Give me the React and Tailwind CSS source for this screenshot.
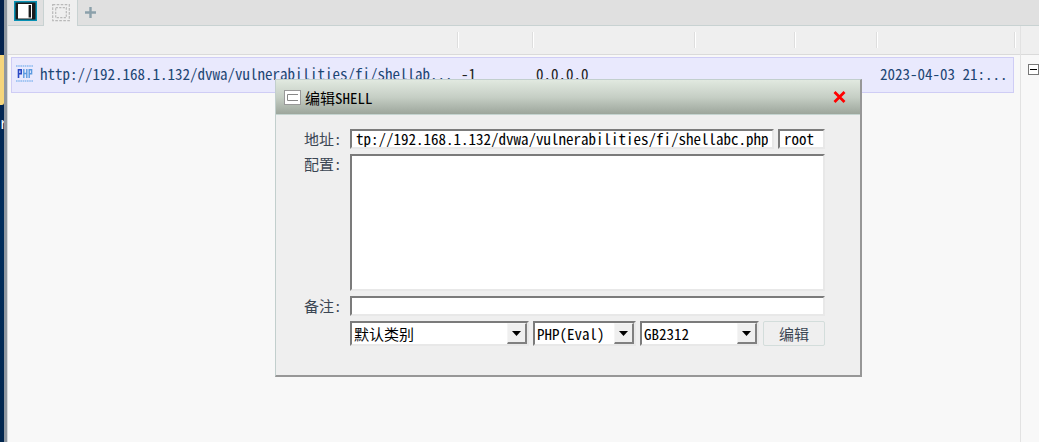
import React, { useState } from "react";

const columns = ["w-auto", "w-[75px]", "w-[162px]", "w-[100px]", "w-[82px]", "w-[138px]"];

const sunken =
  "border-2 border-t-[#7b7b7b] border-l-[#7b7b7b] border-r-[#e8e8e8] border-b-[#e8e8e8] bg-white";

function WindowIcon() {
  return (
    <svg width="23" height="20" viewBox="0 0 23 20" aria-hidden="true">
      <rect width="23" height="20" fill="#0791b4" />
      <rect x="1.5" y="1.5" width="20" height="17" fill="#1b1b1b" />
      <rect x="4" y="3" width="14" height="14.5" fill="#fff" />
      <rect x="14.6" y="4" width="2.4" height="12.5" fill="#1b1b1b" />
    </svg>
  );
}

function DottedIcon() {
  return (
    <svg width="18" height="18" viewBox="0 0 18 18" fill="none" stroke="#b9b9b9" aria-hidden="true">
      <rect x="0.7" y="0.7" width="16.6" height="16" strokeWidth="1.2" strokeDasharray="2.6 1.4" />
      <rect x="3.7" y="3.7" width="10.6" height="10" strokeWidth="1.2" strokeDasharray="2.2 1.3" />
    </svg>
  );
}

function PhpIcon() {
  return (
    <svg width="17" height="17" viewBox="0 0 17 17" fill="none" aria-hidden="true" className="shrink-0">
      <path d="M0 1h17M0 16h17" stroke="#5fa4ea" strokeWidth="1.2" strokeDasharray="1.6 0.6" />
      <path d="M2.5 13V4.8H5.2v4H2.5" stroke="#2a49c4" strokeWidth="1.6" />
      <path d="M7.8 4v9M10.8 4v9M7.8 8.5h3" stroke="#5c9be0" strokeWidth="1.4" />
      <path d="M13.2 13V4.8h2.4v4h-2.4" stroke="#5c9be0" strokeWidth="1.4" />
    </svg>
  );
}

function Divider() {
  return <div className="h-4 w-[2px] border-l border-l-[#dedede] bg-white" />;
}

function SelectBox({ label, value, options, onChange, className }) {
  return (
    <div className={`relative h-[25px] ${sunken} ${className}`}>
      <select
        aria-label={label}
        value={value}
        onChange={(e) => onChange(e.target.value)}
        className="block w-full h-full pl-[2px] pr-5 appearance-none bg-white text-black leading-5 outline-none"
      >
        {options.map((option) => (
          <option key={option}>{option}</option>
        ))}
      </select>
      <span className="pointer-events-none absolute inset-y-0 right-0 flex items-center justify-center w-5 bg-[#efefef] border border-r-2 border-b-2 border-t-[#f5f5f5] border-l-[#f5f5f5] border-r-[#808080] border-b-[#808080]">
        <svg width="9" height="5" viewBox="0 0 9 5" aria-hidden="true">
          <path d="M0 0h9L4.5 5z" fill="#000" />
        </svg>
      </span>
    </div>
  );
}

function EditDialog({ onClose }) {
  const [form, setForm] = useState({
    url: "tp://192.168.1.132/dvwa/vulnerabilities/fi/shellabc.php",
    password: "root",
    config: "",
    note: "",
    category: "默认类别",
    type: "PHP(Eval)",
    charset: "GB2312",
  });

  const update = (key, value) => setForm({ ...form, [key]: value });

  return (
    <div
      role="dialog"
      aria-labelledby="dialog-title"
      className="absolute left-[275px] top-[79px] w-[587px] bg-[#efefef] border border-r-2 border-b-2 border-t-[#c2cfcd] border-l-[#c2cfcd] border-r-[#979797] border-b-[#979797]"
    >
      <div className="flex items-center h-[35px] pl-2 pr-[14px] border-b border-[#c5d4d0] bg-linear-to-b from-[#e1e9e0] via-[#c6cfc5] to-[#9da69c]">
        <svg width="17" height="15" viewBox="0 0 17 15" fill="none" aria-hidden="true">
          <rect x="0.5" y="0.5" width="16" height="14" fill="#fff" stroke="#999" />
          <path d="M14 4.5H3.5v6H14" stroke="#888" />
        </svg>
        <h2 id="dialog-title" className="ml-1 pt-px text-black">
          编辑SHELL
        </h2>
        <button type="button" aria-label="关闭" onClick={onClose} className="ml-auto">
          <svg width="13" height="12" viewBox="0 0 13 12" aria-hidden="true">
            <path d="M1.5 1l10 10M11.5 1l-10 10" stroke="#f00" strokeWidth="2.8" />
          </svg>
        </button>
      </div>
      <form
        onSubmit={(e) => e.preventDefault()}
        className="grid grid-cols-[46px_1fr] gap-y-[5px] pt-[14px] pr-[35px] pb-[29px] pl-7 text-[#3b4653]"
      >
        <label htmlFor="url">地址:</label>
        <div className="flex gap-1">
          <input
            id="url"
            type="text"
            value={form.url}
            onChange={(e) => update("url", e.target.value)}
            className={`min-w-0 flex-1 h-5 px-1 text-black outline-none ${sunken}`}
          />
          <input
            type="text"
            aria-label="密码"
            value={form.password}
            onChange={(e) => update("password", e.target.value)}
            className={`w-[47px] h-5 px-1 text-black outline-none ${sunken}`}
          />
        </div>
        <label htmlFor="config">配置:</label>
        <textarea
          id="config"
          value={form.config}
          onChange={(e) => update("config", e.target.value)}
          className={`block w-full h-[137px] px-1 resize-none text-black outline-none ${sunken}`}
        />
        <label htmlFor="note">备注:</label>
        <input
          id="note"
          type="text"
          value={form.note}
          onChange={(e) => update("note", e.target.value)}
          className={`w-full h-5 px-1 text-black outline-none ${sunken}`}
        />
        <div className="col-start-2 flex gap-1">
          <SelectBox
            label="类别"
            value={form.category}
            options={["默认类别"]}
            onChange={(v) => update("category", v)}
            className="flex-1"
          />
          <SelectBox
            label="脚本类型"
            value={form.type}
            options={["PHP(Eval)", "ASP(Eval)", "JSP(Eval)"]}
            onChange={(v) => update("type", v)}
            className="w-[103px]"
          />
          <SelectBox
            label="编码"
            value={form.charset}
            options={["GB2312", "UTF-8", "BIG5"]}
            onChange={(v) => update("charset", v)}
            className="w-[119px]"
          />
          <button type="submit" className="w-[62px] h-[25px] border border-[#d3dddb] rounded-xs">
            编辑
          </button>
        </div>
      </form>
    </div>
  );
}

function ShellTable() {
  const cell = "h-9 p-0 pl-1 pb-[3px] border-y border-[#cfcdf5] bg-[#e9e9fd] whitespace-nowrap";

  return (
    <table className="w-full table-fixed border-separate border-spacing-0 text-left">
      <colgroup>
        <col className="w-[3px]" />
        {columns.map((width, i) => (
          <col key={i} className={width} />
        ))}
        <col className="w-[6px]" />
      </colgroup>
      <thead>
        <tr>
          <th className="p-0 h-[29px] bg-[#efefef] border-b border-[#dadada]" />
          {columns.map((_, i) => (
            <th key={i} className="p-0 bg-[#efefef] border-b border-[#dadada]">
              {i > 0 && <Divider />}
            </th>
          ))}
          <th className="p-0 bg-[#efefef] border-b border-[#dadada]">
            <Divider />
          </th>
        </tr>
      </thead>
      <tbody className="before:block before:h-[2px]">
        <tr>
          <td className="p-0" />
          <td className={`${cell} border-l`}>
            <div className="flex items-center gap-[7px] text-[#1d4674]">
              <PhpIcon />
              <span className="truncate">http://192.168.1.132/dvwa/vulnerabilities/fi/shellab...</span>
            </div>
          </td>
          <td className={cell}>-1</td>
          <td className={cell}>0.0.0.0</td>
          <td className={cell} />
          <td className={cell} />
          <td className={`${cell} text-[#1d4674] border-r`}>2023-04-03 21:...</td>
          <td className="p-0" />
        </tr>
      </tbody>
    </table>
  );
}

function App() {
  const [open, setOpen] = useState(true);

  return (
    <div className="relative flex min-h-screen bg-[#f8f8f8] font-['Noto_Sans_CJK_SC',sans-serif] [font-feature-settings:'hwid','liga'_0] text-[15px] leading-5 text-[#222]">
      <div className="w-1 shrink-0 overflow-hidden bg-linear-to-b from-[#03204a] via-[#002d5c] to-[#01264e] pt-[55px]">
        <div className="h-[50px] rounded-br-xs bg-[#f5d67b]" />
        <div className="mt-2 text-white">r</div>
      </div>
      <div className="w-1 shrink-0 bg-[#8f979f] border-r border-[#d5d8da]" />
      <div className="flex-1 min-w-0">
        <div className="flex h-[26px] bg-[#e0e0e0]">
          <button
            type="button"
            aria-label="窗口"
            className="flex justify-center w-[36px] pt-px border-r border-b border-[#c8d2d2]"
          >
            <WindowIcon />
          </button>
          <button
            type="button"
            aria-label="列表"
            className="flex justify-center w-[34px] pt-1 bg-[#efefef] border-r border-[#c8d2d2]"
          >
            <DottedIcon />
          </button>
          <div className="flex-1 pl-[7px] border-b border-[#c8d2d2]">
            <button type="button" aria-label="新建" className="block pt-[7px]">
              <svg width="11" height="11" viewBox="0 0 11 11" aria-hidden="true">
                <path d="M5.5 0v11M0 5.5h11" stroke="#8ba0aa" strokeWidth="2.4" />
              </svg>
            </button>
          </div>
        </div>
        <div className="flex">
          <main className="flex-1 min-w-0">
            <ShellTable />
          </main>
          <aside className="flex flex-col w-[19px] shrink-0 min-h-[calc(100vh-26px)] border-l border-[#e2e2e2]">
            <div className="h-[29px] bg-[#efefef] border-b border-[#dadada]" />
            <button type="button" aria-label="折叠" className="mt-[9px] ml-[7px]">
              <svg width="11" height="11" viewBox="0 0 11 11" aria-hidden="true">
                <rect x="0.5" y="0.5" width="10" height="10" fill="#fff" stroke="#777" />
                <path d="M2 5.5h7" stroke="#000" />
              </svg>
            </button>
          </aside>
        </div>
      </div>
      {open && <EditDialog onClose={() => setOpen(false)} />}
    </div>
  );
}

export default App;
